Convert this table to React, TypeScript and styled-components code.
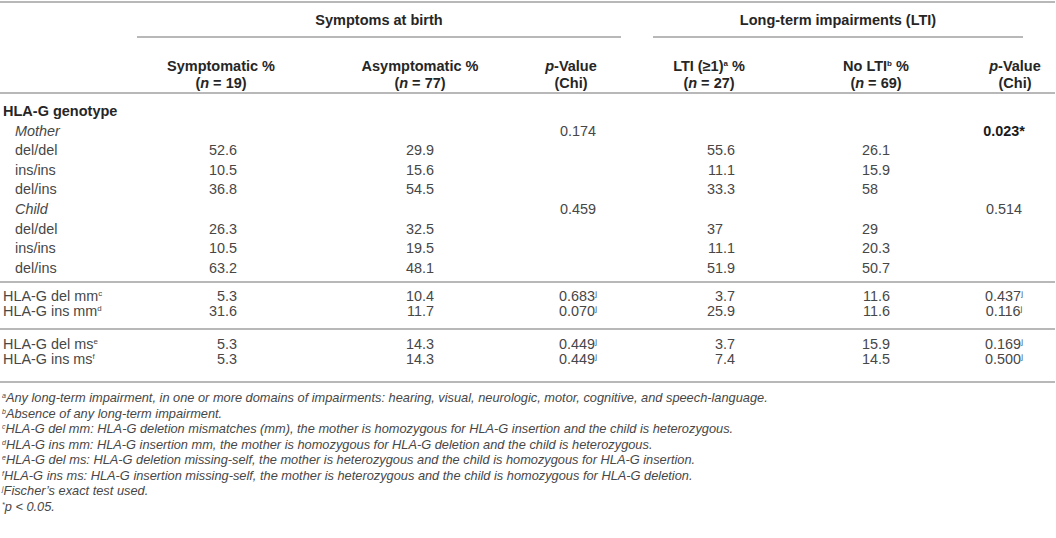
import React from 'react';
import styled, { createGlobalStyle } from 'styled-components';

const GlobalStyle = createGlobalStyle`
  html, body { margin: 0; padding: 0; background: #ffffff; }
  body {
    font-family: "Liberation Sans", Arial, Helvetica, sans-serif;
    color: #474747;
  }
`;

const COLS = '137px 168px 230px 86px 32px 112px 210px 80px';
const RULE = '2px solid #b8b8b8';

const Table = styled.div`
  width: 1055px;
  margin-top: 1px;
  border-top: ${RULE};
`;

const GroupRow = styled.div`
  display: grid;
  grid-template-columns: ${COLS};
  align-items: end;
`;

const GroupCell = styled.div<{ $from: number; $to: number; $mr?: number }>`
  grid-column: ${p => p.$from} / ${p => p.$to};
  margin-right: ${p => p.$mr ?? 0}px;
  padding: 9px 0 7px;
  line-height: 17px;
  font-size: 14.5px;
  font-weight: bold;
  color: #262626;
  text-align: center;
  border-bottom: ${RULE};
`;

const HeadRow = styled.div`
  display: grid;
  grid-template-columns: ${COLS};
  padding: 20px 0 1px;
  border-bottom: ${RULE};
`;

const HeadCell = styled.div<{ $col: number; $pl?: number; $pr?: number }>`
  grid-column: ${p => p.$col};
  padding-left: ${p => p.$pl ?? 0}px;
  padding-right: ${p => p.$pr ?? 0}px;
  line-height: 16.5px;
  font-size: 14.5px;
  font-weight: bold;
  color: #262626;
  text-align: center;
`;

const Section = styled.div<{ $pt: number; $pb: number }>`
  padding: ${p => p.$pt}px 0 ${p => p.$pb}px;
  border-bottom: ${RULE};
`;

const Row = styled.div<{ $h: number }>`
  display: grid;
  grid-template-columns: ${COLS};
  height: ${p => p.$h}px;
  align-items: center;
  font-size: 14.4px;
  line-height: ${p => p.$h}px;
  white-space: nowrap;
`;

const Label = styled.div<{ $indent?: boolean; $bold?: boolean; $italic?: boolean }>`
  grid-column: 1;
  padding-left: ${p => (p.$indent ? 15 : 3)}px;
  font-weight: ${p => (p.$bold ? 'bold' : 'normal')};
  font-style: ${p => (p.$italic ? 'italic' : 'normal')};
  color: ${p => (p.$bold ? '#262626' : '#474747')};
  font-size: ${p => (p.$bold ? '14.5px' : '14.4px')};
`;

const NumCell = styled.div<{ $col: number; $pr: number }>`
  grid-column: ${p => p.$col};
  padding-right: ${p => p.$pr}px;
  text-align: right;
`;

const PCell = styled.div<{ $col: number; $pr: number; $bold?: boolean }>`
  grid-column: ${p => p.$col};
  padding-right: ${p => p.$pr}px;
  text-align: center;
  font-weight: ${p => (p.$bold ? 'bold' : 'normal')};
  color: ${p => (p.$bold ? '#1a1a1a' : '#474747')};
`;

const Ghost = styled.span`
  visibility: hidden;
`;

const Sup = styled.sup`
  font-size: 0.55em;
  line-height: 0;
  vertical-align: 0.62em;
`;

const Notes = styled.div`
  padding: 7px 0 0 2px;
  font-size: 12.8px;
  font-style: italic;
  line-height: 15.5px;
  color: #474747;
`;

const Note = styled.div`
  white-space: nowrap;
`;

type Val = string | undefined;
type DataRow = {
  label: React.ReactNode;
  indent?: boolean;
  bold?: boolean;
  italic?: boolean;
  v?: [Val, Val, Val, Val, Val, Val];
  boldP2?: boolean;
};

const Num: React.FC<{ value: string }> = ({ value }) => (
  <>
    {value}
    {value.includes('.') ? null : <Ghost>.0</Ghost>}
  </>
);

const PVal: React.FC<{ value: string }> = ({ value }) => {
  if (value.endsWith('j')) {
    return (
      <>
        {value.slice(0, -1)}
        <Sup>j</Sup>
      </>
    );
  }
  return <>{value}</>;
};

const section1: DataRow[] = [
  { label: 'HLA-G genotype', bold: true },
  { label: 'Mother', indent: true, italic: true, v: [, , '0.174', , , '0.023*'], boldP2: true },
  { label: 'del/del', indent: true, v: ['52.6', '29.9', , '55.6', '26.1', ,] },
  { label: 'ins/ins', indent: true, v: ['10.5', '15.6', , '11.1', '15.9', ,] },
  { label: 'del/ins', indent: true, v: ['36.8', '54.5', , '33.3', '58', ,] },
  { label: 'Child', indent: true, italic: true, v: [, , '0.459', , , '0.514'] },
  { label: 'del/del', indent: true, v: ['26.3', '32.5', , '37', '29', ,] },
  { label: 'ins/ins', indent: true, v: ['10.5', '19.5', , '11.1', '20.3', ,] },
  { label: 'del/ins', indent: true, v: ['63.2', '48.1', , '51.9', '50.7', ,] },
];

const section2: DataRow[] = [
  { label: <>HLA-G del mm<Sup>c</Sup></>, v: ['5.3', '10.4', '0.683j', '3.7', '11.6', '0.437j'] },
  { label: <>HLA-G ins mm<Sup>d</Sup></>, v: ['31.6', '11.7', '0.070j', '25.9', '11.6', '0.116j'] },
];

const section3: DataRow[] = [
  { label: <>HLA-G del ms<Sup>e</Sup></>, v: ['5.3', '14.3', '0.449j', '3.7', '15.9', '0.169j'] },
  { label: <>HLA-G ins ms<Sup>f</Sup></>, v: ['5.3', '14.3', '0.449j', '7.4', '14.5', '0.500j'] },
];

// column layout for the six data values: grid column, kind, padding-right
const DATA_COLS: { col: number; kind: 'num' | 'p'; pr: number }[] = [
  { col: 2, kind: 'num', pr: 68 },
  { col: 3, kind: 'num', pr: 101 },
  { col: 4, kind: 'p', pr: 0 },
  { col: 6, kind: 'num', pr: 30 },
  { col: 7, kind: 'num', pr: 85 },
  { col: 8, kind: 'p', pr: 22 },
];

const DataRows: React.FC<{ rows: DataRow[]; h: number }> = ({ rows, h }) => (
  <>
    {rows.map((r, i) => (
      <Row key={i} $h={h}>
        <Label $indent={r.indent} $bold={r.bold} $italic={r.italic}>
          {r.label}
        </Label>
        {r.v &&
          DATA_COLS.map((c, j) => {
            const val = r.v![j];
            if (!val) return null;
            return c.kind === 'num' ? (
              <NumCell key={j} $col={c.col} $pr={c.pr}>
                <Num value={val} />
              </NumCell>
            ) : (
              <PCell key={j} $col={c.col} $pr={c.pr} $bold={j === 5 && r.boldP2}>
                <PVal value={val} />
              </PCell>
            );
          })}
      </Row>
    ))}
  </>
);

const PValueHead: React.FC = () => (
  <>
    <i>p</i>-Value
    <br />
    (Chi)
  </>
);

const NHead: React.FC<{ n: number }> = ({ n }) => (
  <>
    (<i>n</i> = {n})
  </>
);

export default function App() {
  return (
    <>
      <GlobalStyle />
      <Table>
        <GroupRow>
          <GroupCell $from={2} $to={5}>Symptoms at birth</GroupCell>
          <GroupCell $from={6} $to={9} $mr={32}>Long-term impairments (LTI)</GroupCell>
        </GroupRow>
        <HeadRow>
          <HeadCell $col={2}>
            Symptomatic %
            <br />
            <NHead n={19} />
          </HeadCell>
          <HeadCell $col={3}>
            Asymptomatic %
            <br />
            <NHead n={77} />
          </HeadCell>
          <HeadCell $col={4} $pr={14}>
            <PValueHead />
          </HeadCell>
          <HeadCell $col={6}>
            LTI (≥1)<Sup>a</Sup> %
            <br />
            <NHead n={27} />
          </HeadCell>
          <HeadCell $col={7} $pl={12}>
            No LTI<Sup>b</Sup> %
            <br />
            <NHead n={69} />
          </HeadCell>
          <HeadCell $col={8}>
            <PValueHead />
          </HeadCell>
        </HeadRow>
        <Section $pt={8} $pb={3}>
          <DataRows rows={section1} h={19.6} />
        </Section>
        <Section $pt={6} $pb={10}>
          <DataRows rows={section2} h={14.5} />
        </Section>
        <Section $pt={7} $pb={15}>
          <DataRows rows={section3} h={14.5} />
        </Section>
        <Notes>
          <Note>
            <Sup>a</Sup>Any long-term impairment, in one or more domains of impairments: hearing, visual,
            neurologic, motor, cognitive, and speech-language.
          </Note>
          <Note>
            <Sup>b</Sup>Absence of any long-term impairment.
          </Note>
          <Note>
            <Sup>c</Sup>HLA-G del mm: HLA-G deletion mismatches (mm), the mother is homozygous for HLA-G
            insertion and the child is heterozygous.
          </Note>
          <Note>
            <Sup>d</Sup>HLA-G ins mm: HLA-G insertion mm, the mother is homozygous for HLA-G deletion and the
            child is heterozygous.
          </Note>
          <Note>
            <Sup>e</Sup>HLA-G del ms: HLA-G deletion missing-self, the mother is heterozygous and the child is
            homozygous for HLA-G insertion.
          </Note>
          <Note>
            <Sup>f</Sup>HLA-G ins ms: HLA-G insertion missing-self, the mother is heterozygous and the child is
            homozygous for HLA-G deletion.
          </Note>
          <Note>
            <Sup>j</Sup>Fischer’s exact test used.
          </Note>
          <Note>
            <Sup>*</Sup>p &lt; 0.05.
          </Note>
        </Notes>
      </Table>
    </>
  );
}
